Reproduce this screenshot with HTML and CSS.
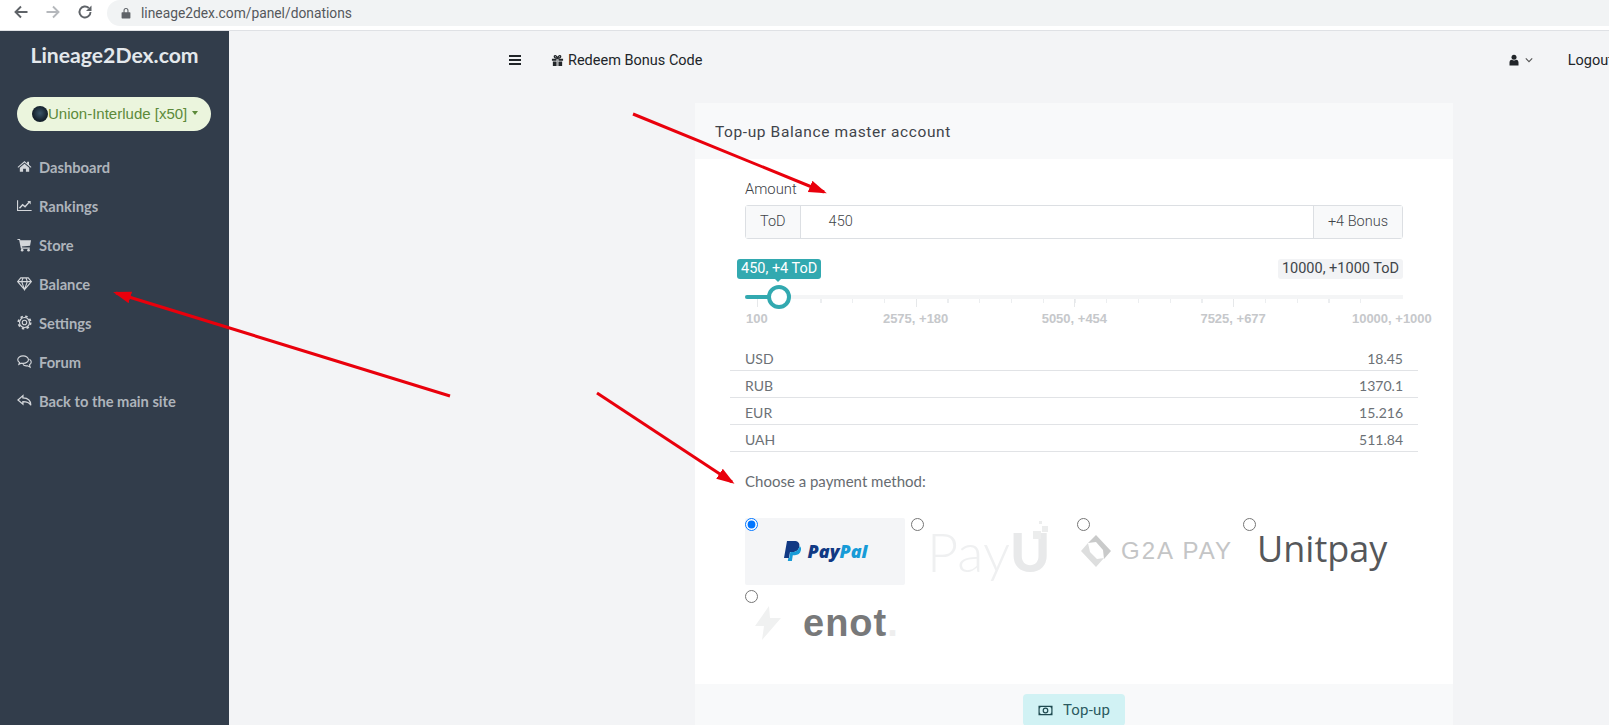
FILE: index.html
```html
<!DOCTYPE html>
<html lang="en">
<head>
    <meta charset="UTF-8">
    <meta name="viewport" content="width=device-width, initial-scale=1.0">
    <title>Lineage2Dex.com</title>
    <link rel="stylesheet" href="styles.css">
</head>
<body>
    <div class="browser-bar">
        <svg class="browser-btn" viewBox="0 0 16 16"><path class="chrome-stroke" d="M14.5 8H2.5M8 2.5L2.5 8L8 13.5"/></svg>
        <svg class="browser-btn" viewBox="0 0 16 16"><path class="chrome-stroke faded" d="M1.5 8H13.5M8 2.5L13.5 8L8 13.5"/></svg>
        <svg class="browser-btn" viewBox="0 0 16 16"><path class="chrome-stroke" d="M13.5 8A5.5 5.5 0 1 1 11.8 4"/><path class="chrome-fill" d="M14.5 1.5V7H9z"/></svg>
        <div class="address">
            <svg class="lock" viewBox="0 0 12 14"><path class="chrome-fill" d="M1.5 6H3V4a3 3 0 0 1 6 0v2h1.5a.8.8 0 0 1 .8.8v6a.8.8 0 0 1-.8.8h-9a.8.8 0 0 1-.8-.8v-6A.8.8 0 0 1 1.5 6zM4.3 6h3.4V4a1.7 1.7 0 0 0-3.4 0z"/></svg>
            <span>lineage2dex.com/panel/donations</span>
        </div>
    </div>

    <div class="app">
        <aside class="sidebar">
            <h1 class="brand">Lineage2Dex.com</h1>
            <button class="server-btn">
                <span class="server-icon"></span>Union-Interlude [x50]<span class="caret"></span>
            </button>
            <nav class="side-nav">
                <a class="side-link">
                    <svg class="side-icon" viewBox="0 0 16 16"><path class="icon-fill" d="M8 2.2L.6 8.4l.7.8L8 3.7l6.7 5.5.7-.8-2.6-2.2V3h-2v1.7zM3 9.3v4.4h3.5v-3.2h3v3.2H13V9.3L8 5.1z"/></svg>
                    Dashboard
                </a>
                <a class="side-link">
                    <svg class="side-icon" viewBox="0 0 16 16"><path class="icon-line" d="M.6 2.5v10.800h15"/><path class="icon-line thick" d="M2.600 11L6 7.200l2.600 2.200 4.400-5"/><path class="icon-fill" d="M11 3.200h3.600v3.600z"/></svg>
                    Rankings
                </a>
                <a class="side-link">
                    <svg class="side-icon" viewBox="0 0 16 16"><path class="icon-fill" d="M.5 2h2.700l.4 1.500H15l-1.100 5.700-8.700 1 .3 1.100h8.200v1.200H4.200L2.300 3.200H.5z"/><circle class="icon-fill" cx="5.500" cy="14" r="1.400"/><circle class="icon-fill" cx="12.300" cy="14" r="1.400"/></svg>
                    Store
                </a>
                <a class="side-link">
                    <svg class="side-icon" viewBox="0 0 16 16"><path class="icon-line" d="M4 2h8l3.300 4L8 14.500.7 6zM.7 6h14.600M5 6l3 8.500L11 6 9.500 2M5 6l1.500-4"/></svg>
                    Balance
                </a>
                <a class="side-link">
                    <svg class="side-icon" viewBox="0 0 16 16"><circle class="icon-line" cx="8" cy="8" r="2.400"/><circle class="icon-line" cx="8" cy="8" r="5.300"/><circle class="gear-teeth" cx="8" cy="8" r="6.600"/></svg>
                    Settings
                </a>
                <a class="side-link">
                    <svg class="side-icon" viewBox="0 0 16 16"><path class="icon-line" d="M6.500 2C3.400 2 .8 3.800.8 6c0 1.200.7 2.300 1.900 3L2 11l2.500-1.200c.6.2 1.300.2 2 .2 3.100 0 5.700-1.800 5.700-4S9.600 2 6.500 2z"/><path class="icon-line" d="M13.300 5.500c1.200.7 1.900 1.800 1.900 3 0 1.200-.7 2.300-1.900 3L14 14l-2.700-1.500c-2 .4-4-.2-5-1.400"/></svg>
                    Forum
                </a>
                <a class="side-link">
                    <svg class="side-icon" viewBox="0 0 16 16"><path class="icon-line medium" d="M6.300 2.800L1 7.400l5.300 4.500V9.200c4 0 6.900 1 8.400 3.800 0-4.600-3-7.600-8.400-7.800z"/></svg>
                    Back to the main site
                </a>
            </nav>
        </aside>

        <main class="content">
            <div class="topnav">
                <svg class="burger" viewBox="0 0 12 10"><path class="burger-line" d="M0 1h12M0 5h12M0 9h12"/></svg>
                <a class="redeem">
                    <svg class="gift" viewBox="0 0 14 14"><path class="dark-fill" d="M1 5h5v2.200H1zM8 5h5v2.200H8zM2 8h4v5H2zM8 8h4v5H8zM6.800 5h.4v8h-.4z"/><path class="dark-line" d="M7 4.600C5 4.600 3.500 4 3.500 2.700S5.800.8 7 4.600zM7 4.600c2 0 3.500-.6 3.500-1.900S8.200.8 7 4.600z"/></svg>
                    Redeem Bonus Code
                </a>
                <div class="topnav-right">
                    <svg class="user" viewBox="0 0 12 14"><circle class="dark-fill" cx="6" cy="3.800" r="3"/><path class="dark-fill" d="M.6 13.500V10c0-1.800 1-2.900 2.800-3.200 1.600 1 3.600 1 5.200 0 1.800.3 2.800 1.400 2.800 3.200v3.500z"/></svg>
                    <svg class="chevron" viewBox="0 0 10 6"><path class="chevron-line" d="M1 1l4 4 4-4"/></svg>
                    <a class="logout">Logout</a>
                </div>
            </div>

            <section class="card">
                <div class="card-header">Top-up Balance master account</div>
                <div class="card-body">
                    <label class="field-label">Amount</label>
                    <div class="input-group">
                        <span class="addon addon-left">ToD</span>
                        <span class="amount-input">450</span>
                        <span class="addon addon-right">+4 Bonus</span>
                    </div>

                    <div class="slider">
                        <div class="slider-tips">
                            <span class="tip tip-active">450, +4 ToD</span>
                            <span class="tip tip-max">10000, +1000 ToD</span>
                        </div>
                        <div class="track">
                            <div class="track-fill"></div>
                            <div class="thumb"></div>
                        </div>
                        <div class="ticks"></div>
                        <div class="slider-labels">
                            <span>100</span>
                            <span>2575, +180</span>
                            <span>5050, +454</span>
                            <span>7525, +677</span>
                            <span>10000, +1000</span>
                        </div>
                    </div>

                    <table class="rates">
                        <tr><td>USD</td><td class="rate-value">18.45</td></tr>
                        <tr><td>RUB</td><td class="rate-value">1370.1</td></tr>
                        <tr><td>EUR</td><td class="rate-value">15.216</td></tr>
                        <tr><td>UAH</td><td class="rate-value">511.84</td></tr>
                    </table>

                    <p class="choose">Choose a payment method:</p>

                    <div class="methods">
                        <label class="method method-selected">
                            <input type="radio" name="method" checked>
                            <span class="logo logo-paypal">
                                <svg class="pp-mark" viewBox="0 0 18 21">
                                    <path class="pp-dark" d="M4 0h7c4 0 6 2 5.300 5.500C15.500 9.500 13 11 9.500 11H7l-1 6H1z"/>
                                    <path class="pp-light" d="M16.600 5c1.300 1 1.700 2.500 1.300 4.300-.7 3.300-3 4.900-6 4.900H9.800L8.900 20H4.800l.5-3h1l1-6H9.500C13 11 15.800 9.300 16.600 5z"/>
                                </svg>
                                <span class="pp-pay">Pay</span><span class="pp-pal">Pal</span>
                            </span>
                        </label>
                        <label class="method">
                            <input type="radio" name="method">
                            <span class="logo logo-payu">
                                <span class="payu-thin">Pay</span><span class="payu-bold">U</span>
                                <svg class="payu-dots" viewBox="0 0 16 24"><rect class="payu-dot" x="0" y="10" width="8" height="8"/><rect class="payu-dot" x="9" y="5" width="6" height="6"/><rect class="payu-dot" x="6" y="0" width="3" height="3"/></svg>
                            </span>
                        </label>
                        <label class="method">
                            <input type="radio" name="method">
                            <span class="logo logo-g2a">
                                <svg class="g2a-mark" viewBox="0 0 30 32">
                                    <path class="g2a-a" d="M15 0l15 16-7 8-1-9-7-8-8 1z"/>
                                    <path class="g2a-b" d="M0 16l7-8 2 9 7 7 7-1-8 9z"/>
                                </svg>
                                G2A PAY
                            </span>
                        </label>
                        <label class="method">
                            <input type="radio" name="method">
                            <span class="logo logo-unitpay">Unitpay</span>
                        </label>
                        <label class="method">
                            <input type="radio" name="method">
                            <span class="logo logo-enot">
                                <svg class="enot-mark" viewBox="0 0 26 34"><path class="enot-bolt" d="M14 0L0 20h9L7 34l19-22H15z"/></svg>
                                enot<span class="enot-dot">.</span>
                            </span>
                        </label>
                    </div>
                </div>
                <div class="card-footer">
                    <button class="topup-btn">
                        <svg class="money" viewBox="0 0 16 12"><path class="money-line" d="M1 1.500h14v9H1z"/><circle class="money-line" cx="8" cy="6" r="2.500"/><path class="money-dark" d="M1 1h3L1 4zM15 1v3l-3-3zM1 11V8l3 3zM15 11h-3l3-3z"/></svg>
                        Top-up
                    </button>
                </div>
            </section>
        </main>
    </div>

    <svg class="arrows" viewBox="0 0 1609 725">
        <defs>
            <marker id="head" markerUnits="userSpaceOnUse" markerWidth="22" markerHeight="14" refX="15" refY="6" orient="auto">
                <path class="arrow-head" d="M0 0L18 6L0 12z"/>
            </marker>
        </defs>
        <line class="arrow" x1="633" y1="114" x2="824" y2="192" marker-end="url(#head)"/>
        <line class="arrow" x1="450" y1="396" x2="116" y2="293" marker-end="url(#head)"/>
        <line class="arrow" x1="597" y1="393" x2="732" y2="482" marker-end="url(#head)"/>
    </svg>
</body>
</html>
```

FILE: styles.css
```css
* {
    box-sizing: border-box;
}

html, body {
    margin: 0;
    padding: 0;
    height: 725px;
    overflow: hidden;
}

body {
    position: relative;
    font-family: Roboto, Arial, sans-serif;
    background-color: #f3f4f6;
    color: #333;
}

/* browser chrome */
.browser-bar {
    display: flex;
    align-items: flex-start;
    height: 31px;
    padding-left: 13px;
    background-color: #fff;
    border-bottom: 1px solid #dfe1e5;
}

.browser-btn {
    width: 16px;
    height: 16px;
    margin: 4px 16px 0 0;
}

.browser-btn:nth-child(3) {
    margin-right: 14px;
}

.chrome-stroke {
    fill: none;
    stroke: #5f6368;
    stroke-width: 1.9;
}

.chrome-stroke.faded {
    stroke: #b5b8bc;
}

.chrome-fill {
    fill: #5f6368;
}

.address {
    display: flex;
    align-items: center;
    flex: 1;
    height: 26px;
    padding-left: 14px;
    background-color: #f1f3f4;
    border-radius: 13px 0 0 13px;
    font-size: 13.8px;
    color: #55585c;
}

.lock {
    width: 10px;
    height: 12px;
    margin-right: 10px;
}

/* layout */
.app {
    display: flex;
    height: 694px;
}

.sidebar {
    width: 229px;
    flex-shrink: 0;
    background-color: #323d4b;
    font-family: Lato, Arial, sans-serif;
}

.brand {
    margin: 11px 0 0;
    text-align: center;
    font-size: 21.2px;
    line-height: 26px;
    font-weight: 700;
    color: #e4e8ec;
}

.server-btn {
    display: flex;
    align-items: center;
    width: 194px;
    height: 34px;
    margin: 29px 0 0 17px;
    padding: 0 0 2px 15px;
    border: none;
    border-radius: 17px;
    background-color: #ebf5dd;
    color: #5c8a3a;
    font-family: "Liberation Sans", Arial, sans-serif;
    font-size: 15px;
    white-space: nowrap;
}

.server-icon {
    width: 16px;
    height: 16px;
    margin-top: 2px;
    border-radius: 50%;
    background: radial-gradient(circle at 50% 45%, #3a5468 0, #16222e 60%, #0e1620 100%);
}

.caret {
    width: 0;
    height: 0;
    margin-left: 5px;
    border-left: 3.5px solid transparent;
    border-right: 3.5px solid transparent;
    border-top: 4px solid #5c8a3a;
}

.side-nav {
    display: flex;
    flex-direction: column;
    margin-top: 16px;
}

.side-link {
    display: flex;
    align-items: center;
    height: 39px;
    padding-left: 17px;
    font-size: 14.7px;
    font-weight: 700;
    color: #aeb4bb;
}

.side-icon {
    width: 15px;
    height: 15px;
    margin-right: 7px;
    flex-shrink: 0;
}

.icon-fill {
    fill: #d3d6da;
}

.icon-line {
    fill: none;
    stroke: #d3d6da;
    stroke-width: 1.2;
}

.icon-line.medium {
    stroke-width: 1.4;
}

.icon-line.thick {
    stroke-width: 1.6;
}

.gear-teeth {
    fill: none;
    stroke: #d3d6da;
    stroke-width: 1.8;
    stroke-dasharray: 2.6 2.58;
}

.content {
    flex: 1;
    min-width: 0;
}

/* top nav */
.topnav {
    display: flex;
    align-items: center;
    height: 58px;
    margin-right: -4px;
    padding-left: 280px;
    font-size: 14.5px;
    color: #212529;
}

.burger {
    width: 12px;
    height: 10px;
    margin-right: 30px;
}

.burger-line {
    stroke: #212529;
    stroke-width: 2;
}

.redeem {
    display: flex;
    align-items: center;
    gap: 4px;
}

.gift {
    width: 13px;
    height: 13px;
}

.dark-fill {
    fill: #212529;
}

.dark-line {
    fill: none;
    stroke: #212529;
    stroke-width: 1.3;
}

.topnav-right {
    display: flex;
    align-items: center;
    margin-left: auto;
}

.user {
    width: 10px;
    height: 12px;
    margin-right: 6px;
}

.chevron {
    width: 8px;
    height: 6px;
    margin-right: 35px;
}

.chevron-line {
    fill: none;
    stroke: #555;
    stroke-width: 1.4;
}

/* card */
.card {
    width: 758px;
    margin: 14px 0 0 466px;
}

.card-header {
    height: 56px;
    padding: 20px 20px 0;
    background-color: #f8f9fa;
    font-family: Roboto, Arial, sans-serif;
    font-size: 15.5px;
    letter-spacing: .6px;
    color: #3f444a;
}

.card-body {
    height: 525px;
    padding: 21px 50px 0;
    background-color: #fff;
}

.field-label {
    display: block;
    font-size: 14.8px;
    font-weight: 300;
    line-height: 18px;
    color: #3c4146;
}

.input-group {
    display: flex;
    height: 34px;
    margin-top: 7px;
    border: 1px solid #dcdfe3;
    border-radius: 3px;
    font-size: 14.5px;
    font-weight: 300;
    line-height: 32px;
    color: #3f4449;
}

.addon {
    padding: 0 14px;
    background-color: #f8f9fa;
}

.addon-left {
    border-right: 1px solid #dcdfe3;
}

.addon-right {
    border-left: 1px solid #dcdfe3;
}

.amount-input {
    flex: 1;
    padding-left: 28px;
}

/* slider */
.slider {
    margin-top: 20px;
}

.slider-tips {
    display: flex;
    justify-content: space-between;
    font-size: 14.5px;
    line-height: 20px;
}

.tip {
    padding: 0 4px;
    border-radius: 3px;
}

.tip-active {
    position: relative;
    margin-left: -8px;
    background-color: #32a9b0;
    color: #fff;
}

.tip-active::after {
    content: "";
    position: absolute;
    left: 38px;
    bottom: -3px;
    border-left: 3px solid transparent;
    border-right: 3px solid transparent;
    border-top: 3px solid #32a9b0;
}

.tip-max {
    background-color: #f2f3f5;
    color: #40454a;
}

.track {
    position: relative;
    height: 4px;
    margin-top: 16px;
    background-color: #f4f5f6;
}

.track-fill {
    width: 34px;
    height: 4px;
    border-radius: 2px 0 0 2px;
    background-color: #32a9b0;
}

.thumb {
    position: absolute;
    left: 22px;
    top: -10px;
    width: 24px;
    height: 24px;
    border: 4px solid #32a9b0;
    border-radius: 50%;
    background-color: #fff;
}

.ticks {
    height: 8px;
    margin: 0 11px 0 11.500px;
    background-image:
        repeating-linear-gradient(90deg, #e6e8ea 0, #e6e8ea 1px, transparent 1px, transparent 158.750px),
        repeating-linear-gradient(90deg, #eceef0 0, #eceef0 1px, transparent 1px, transparent 31.750px);
    background-size: 100% 8px, 100% 4px;
    background-repeat: no-repeat;
}

.slider-labels {
    display: grid;
    grid-template-columns: repeat(5, 158.750px);
    margin: 5px -68px 0 -67.500px;
    font-family: "Liberation Sans", Arial, sans-serif;
    font-size: 13px;
    line-height: 14px;
    font-weight: 700;
    color: #c6c8cb;
    text-align: center;
}

/* rates */
.rates {
    width: 688px;
    margin: 17px 0 0 -15px;
    border-collapse: collapse;
    font-family: Lato, Arial, sans-serif;
    font-size: 14px;
    color: #6c7176;
}

.rates td {
    height: 27px;
    padding: 4px 15px 0;
    border-bottom: 1px solid #e1e3e6;
}

.rate-value {
    text-align: right;
}

.choose {
    margin: 20px 0 0;
    font-family: Lato, Arial, sans-serif;
    font-size: 15px;
    line-height: 18px;
    color: #676c71;
}

/* payment methods */
.methods {
    display: flex;
    flex-wrap: wrap;
    margin: 28px -10px 0 0;
    row-gap: 5px;
}

.method {
    position: relative;
    display: block;
    width: 166px;
    height: 67px;
    padding-right: 6px;
}

.method input {
    position: absolute;
    left: 0;
    top: 0;
    width: 13px;
    height: 13px;
    margin: 0;
}

.logo {
    display: flex;
    align-items: center;
    justify-content: center;
    width: 160px;
    height: 67px;
    white-space: nowrap;
}

.method-selected .logo {
    background-color: #f4f5f7;
    border-radius: 2px;
}

.logo-paypal {
    font-family: "Open Sans", Arial, sans-serif;
    font-size: 18px;
    font-weight: 800;
    font-style: italic;
}

.pp-mark {
    width: 18px;
    height: 21px;
    margin-right: 7px;
}

.pp-dark {
    fill: #113984;
}

.pp-light {
    fill: #179bd7;
}

.pp-pay {
    color: #113984;
}

.pp-pal {
    color: #179bd7;
}

.logo-payu {
    position: relative;
    justify-content: flex-start;
    padding-left: 16px;
    font-family: Lato, Arial, sans-serif;
    font-size: 54px;
    color: #eff0f1;
}

.payu-thin {
    font-weight: 300;
}

.payu-bold {
    font-weight: 900;
    color: #e8e9ea;
}

.payu-dots {
    position: absolute;
    left: 122px;
    top: 3px;
    width: 16px;
    height: 24px;
}

.payu-dot {
    fill: #eceded;
}

.logo-g2a {
    gap: 10px;
    font-family: "Liberation Sans", Arial, sans-serif;
    font-size: 24px;
    letter-spacing: 2px;
    color: #c4c5c6;
}

.g2a-mark {
    width: 30px;
    height: 32px;
    flex-shrink: 0;
}

.g2a-a {
    fill: #c9caca;
}

.g2a-b {
    fill: #dddede;
}

.logo-unitpay {
    justify-content: flex-start;
    padding: 0 0 5px 14px;
    font-family: "Open Sans", Arial, sans-serif;
    font-size: 36px;
    color: #55575a;
}

.logo-enot {
    justify-content: flex-start;
    padding-left: 10px;
    font-family: "Liberation Sans", Arial, sans-serif;
    font-size: 38px;
    font-weight: 700;
    letter-spacing: 1px;
    color: #78797a;
}

.enot-mark {
    width: 26px;
    height: 34px;
    margin-right: 22px;
}

.enot-bolt {
    fill: #f0f1f1;
}

.enot-dot {
    color: #eeeeee;
}

.card-footer {
    display: flex;
    justify-content: center;
    height: 60px;
    padding-top: 10px;
    background-color: #f8f9fa;
}

.topup-btn {
    display: flex;
    align-items: center;
    gap: 10px;
    height: 32px;
    padding: 0 15px;
    border: none;
    border-radius: 4px;
    background-color: #d1f2f4;
    color: #2b5a60;
    font-family: Roboto, Arial, sans-serif;
    font-size: 15px;
    letter-spacing: .2px;
}

.money {
    width: 15px;
    height: 11px;
}

.money-line {
    fill: none;
    stroke: #1f4a50;
    stroke-width: 1.300;
}

.money-dark {
    fill: #1f4a50;
}

/* annotation arrows */
.arrows {
    position: absolute;
    left: 0;
    top: 0;
    width: 1609px;
    height: 725px;
    pointer-events: none;
}

.arrow {
    stroke: #e9000c;
    stroke-width: 3;
}

.arrow-head {
    fill: #e9000c;
}
```
